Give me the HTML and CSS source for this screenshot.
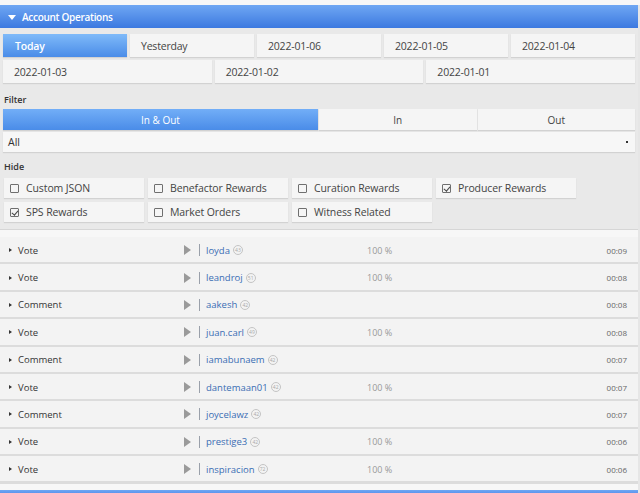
FILE: index.html
```html
<!DOCTYPE html>
<html>
<head>
<meta charset="utf-8">
<link rel="stylesheet" href="styles.css">
</head>
<body>
<div class="topstrip"></div>
<section class="panel">
  <div class="head"><span class="caret"></span>Account Operations</div>
  <div class="body">
    <div class="days days5">
      <div class="btn active">Today</div>
      <div class="btn">Yesterday</div>
      <div class="btn">2022-01-06</div>
      <div class="btn">2022-01-05</div>
      <div class="btn">2022-01-04</div>
    </div>
    <div class="days days3">
      <div class="btn">2022-01-03</div>
      <div class="btn">2022-01-02</div>
      <div class="btn">2022-01-01</div>
    </div>
    <div class="label">Filter</div>
    <div class="tabs">
      <div class="tab active">In &amp; Out</div>
      <div class="tab">In</div>
      <div class="tab">Out</div>
    </div>
    <div class="select">All<span class="sel-arrow"></span></div>
    <div class="label label-hide">Hide</div>
    <div class="checks">
      <div class="check"><span class="box"></span>Custom JSON</div>
      <div class="check"><span class="box"></span>Benefactor Rewards</div>
      <div class="check"><span class="box"></span>Curation Rewards</div>
      <div class="check"><span class="box checked"></span>Producer Rewards</div>
      <div class="check"><span class="box checked"></span>SPS Rewards</div>
      <div class="check"><span class="box"></span>Market Orders</div>
      <div class="check"><span class="box"></span>Witness Related</div>
    </div>
    <div class="ops">
      <div class="ops-top"></div>
      <div class="op"><span class="op-type"><i class="tri"></i>Vote</span><span class="op-user"><i class="play"></i><i class="bar"></i><a>loyda</a><b class="rep">43</b></span><span class="op-pct">100 %</span><span class="op-time">00:09</span></div>
      <div class="op"><span class="op-type"><i class="tri"></i>Vote</span><span class="op-user"><i class="play"></i><i class="bar"></i><a>leandroj</a><b class="rep">51</b></span><span class="op-pct">100 %</span><span class="op-time">00:08</span></div>
      <div class="op"><span class="op-type"><i class="tri"></i>Comment</span><span class="op-user"><i class="play"></i><i class="bar"></i><a>aakesh</a><b class="rep">42</b></span><span class="op-pct"></span><span class="op-time">00:08</span></div>
      <div class="op"><span class="op-type"><i class="tri"></i>Vote</span><span class="op-user"><i class="play"></i><i class="bar"></i><a>juan.carl</a><b class="rep">49</b></span><span class="op-pct">100 %</span><span class="op-time">00:08</span></div>
      <div class="op"><span class="op-type"><i class="tri"></i>Comment</span><span class="op-user"><i class="play"></i><i class="bar"></i><a>iamabunaem</a><b class="rep">42</b></span><span class="op-pct"></span><span class="op-time">00:07</span></div>
      <div class="op"><span class="op-type"><i class="tri"></i>Vote</span><span class="op-user"><i class="play"></i><i class="bar"></i><a>dantemaan01</a><b class="rep">42</b></span><span class="op-pct">100 %</span><span class="op-time">00:07</span></div>
      <div class="op"><span class="op-type"><i class="tri"></i>Comment</span><span class="op-user"><i class="play"></i><i class="bar"></i><a>joycelawz</a><b class="rep">42</b></span><span class="op-pct"></span><span class="op-time">00:07</span></div>
      <div class="op"><span class="op-type"><i class="tri"></i>Vote</span><span class="op-user"><i class="play"></i><i class="bar"></i><a>prestige3</a><b class="rep">42</b></span><span class="op-pct">100 %</span><span class="op-time">00:06</span></div>
      <div class="op"><span class="op-type"><i class="tri"></i>Vote</span><span class="op-user"><i class="play"></i><i class="bar"></i><a>inspiracion</a><b class="rep">72</b></span><span class="op-pct">100 %</span><span class="op-time">00:06</span></div>
      <div class="ops-bottom"></div>
    </div>
  </div>
</section>
<div class="nexthead"></div>
</body>
</html>
```
FILE: styles.css
```css
* { box-sizing: border-box; }
html, body { margin: 0; padding: 0; }
body {
  background: #e6e6e6;
  font-family: "Open Sans", "Noto Sans", sans-serif;
  color: #444;
  width: 640px;
  height: 493px;
  overflow: hidden;
}
.topstrip { height: 5px; background: #f7f7f7; }
.panel { width: 638px; background: #e9e9e9; }
.head {
  height: 23px;
  display: flex;
  align-items: center;
  background: linear-gradient(#6fa7f3, #3c79e0);
  color: #fff;
  font-size: 10px;
  font-weight: 600;
  letter-spacing: -0.3px;
  padding-left: 8px;
}
.caret {
  width: 0; height: 0;
  border-left: 4px solid transparent;
  border-right: 4px solid transparent;
  border-top: 5px solid #fff;
  margin-right: 6px;
  margin-top: 1px;
}
.body { padding: 6px 3px 0 3px; }
.days { display: grid; gap: 3px; margin-bottom: 3px; }
.days5 { grid-template-columns: repeat(5, 1fr); }
.days3 { grid-template-columns: repeat(3, 1fr); }
.btn {
  height: 23px;
  display: flex;
  align-items: center;
  padding-left: 11px;
  background: #f5f5f5;
  box-shadow: 0 1px 1px #d2d2d2;
  font-size: 10.5px;
  letter-spacing: -0.2px;
  color: #444;
}
.btn.active {
  background: linear-gradient(#7fbaf9, #4a8ce8);
  color: #fff;
  font-weight: 600;
  padding-left: 12px;
}
.label {
  font-size: 9px;
  font-weight: 600;
  color: #333;
  padding: 7px 0 0 1px;
  height: 23px;
}
.label-hide { height: 26px; padding-top: 8px; }
.tabs { display: grid; grid-template-columns: 2fr 1fr 1fr; gap: 1px; height: 21px; }
.tab {
  display: flex; align-items: center; justify-content: center;
  background: #f5f5f5;
  box-shadow: 0 1px 1px #d2d2d2;
  font-size: 10px;
  color: #444;
}
.tab.active { background: linear-gradient(#72aef7, #4a8ce8); color: #fff; }
.select {
  margin-top: 2px;
  height: 20px;
  display: flex; align-items: center; justify-content: space-between;
  padding: 0 7px 0 5px;
  background: #f7f7f7;
  box-shadow: 0 1px 1px #d2d2d2;
  font-size: 10.5px;
  color: #333;
}
.sel-arrow { width: 2px; height: 2px; background: #333; }
.checks {
  display: grid;
  grid-template-columns: repeat(4, 140px);
  gap: 4px 4px;
  padding-left: 1px;
}
.check {
  height: 20px;
  display: flex; align-items: center;
  background: #f5f5f5;
  box-shadow: 0 1px 1px #d2d2d2;
  font-size: 10.5px;
  letter-spacing: -0.1px;
  color: #444;
  padding-left: 6px;
}
.box {
  width: 9px; height: 9px;
  border: 1px solid #6f6f6f;
  border-radius: 1px;
  margin-right: 7px;
  position: relative;
  flex: none;
}
.box.checked::after {
  content: "";
  position: absolute;
  left: 2px; top: 0px;
  width: 2.5px; height: 5px;
  border-right: 1px solid #444;
  border-bottom: 1px solid #444;
  transform: rotate(40deg);
}
.ops { margin: 7px -3px 0 -3px; border-top: 1px solid #d6d6d6; }
.ops-top { height: 7px; background: #f7f7f7; }
.op {
  height: 27.375px;
  display: flex;
  align-items: center;
  background: #f3f3f3;
  border-bottom: 2px solid #dcdcdc;
  font-size: 9.5px;
  padding-left: 9px;
  padding-top: 1px;
}
.op:last-of-type { border-bottom: 0; }
.op-type { width: 175px; display: flex; align-items: center; color: #333; }
.tri {
  width: 0; height: 0;
  border-top: 2.5px solid transparent;
  border-bottom: 2.5px solid transparent;
  border-left: 3px solid #333;
  margin-right: 6px;
}
.op-user { width: 183px; display: flex; align-items: center; }
.play {
  width: 0; height: 0;
  border-top: 5px solid transparent;
  border-bottom: 5px solid transparent;
  border-left: 7px solid #9a9a9a;
  margin-right: 8px;
}
.bar { width: 1px; height: 12px; background: #9aa0aa; margin-right: 6px; }
.op-user a { color: #3a6db4; }
.rep {
  margin-left: 3px;
  width: 10px; height: 10px;
  border: 1px solid #c4c4c4;
  border-radius: 50%;
  font-size: 5px;
  font-weight: normal;
  color: #aaa;
  display: flex; align-items: center; justify-content: center;
}
.op-pct { flex: 1; color: #999; font-size: 9px; }
.op-time { font-size: 8px; color: #666; padding-right: 11px; }
.ops-bottom { height: 7px; background: #f7f7f7; border-top: 1px solid #dcdcdc; }
.nexthead { height: 4px; background: linear-gradient(#6fa7f3, #5890ec); width: 638px; }
```
